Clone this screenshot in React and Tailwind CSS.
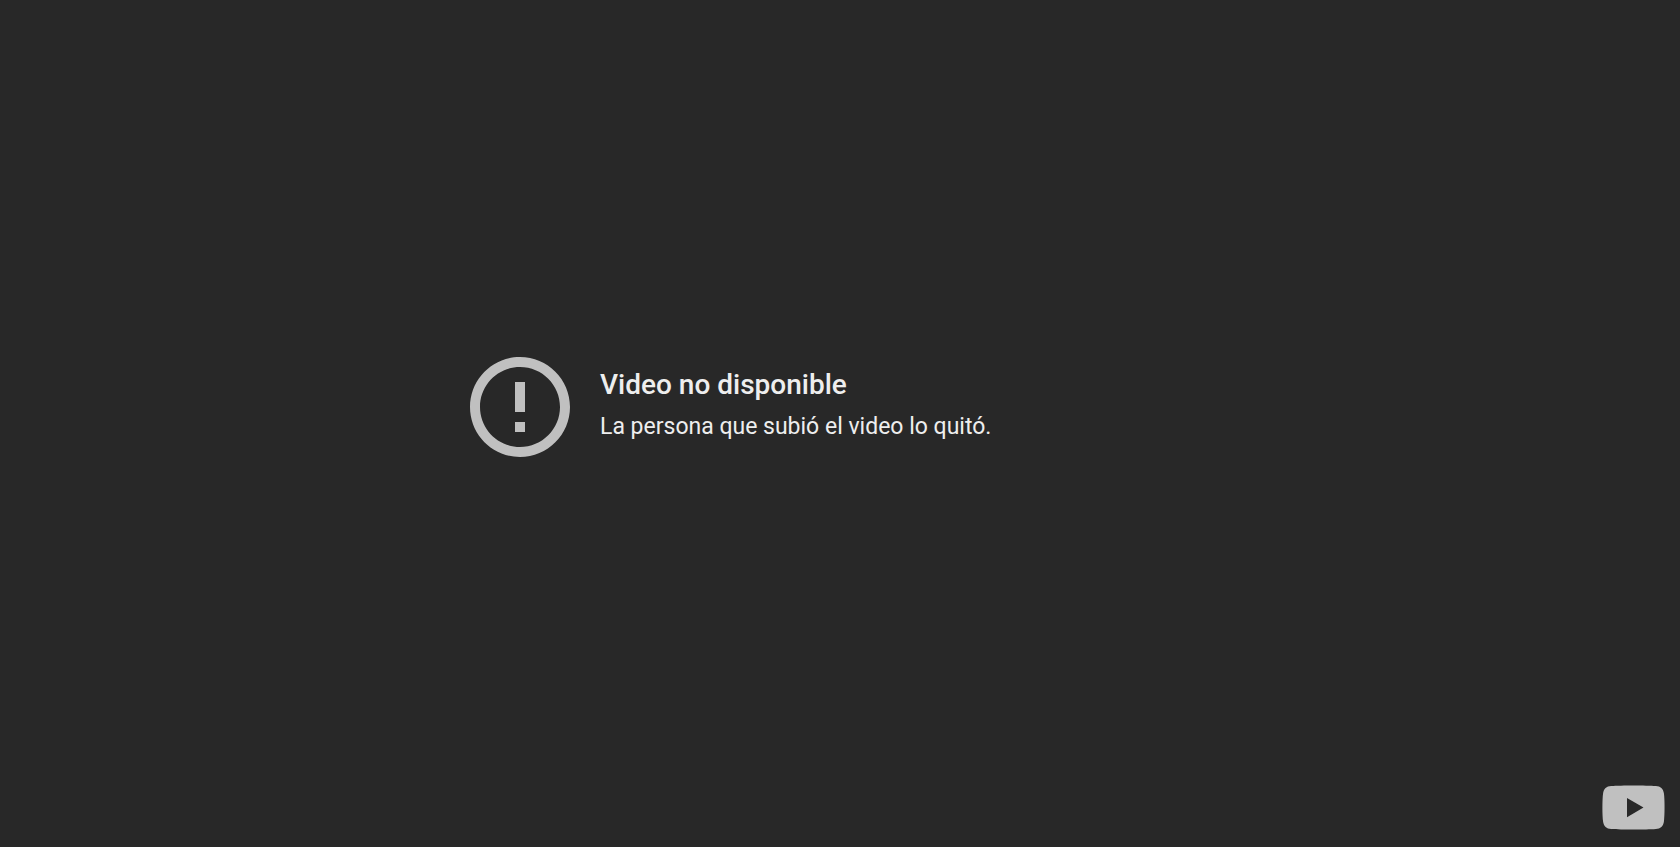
function ErrorIcon() {
  return (
    <svg className="size-[120px] shrink-0" viewBox="0 0 24 24" fill="#c0c0c0" aria-hidden="true">
      <path d="M11 15h2v2h-2zm0-8h2v6h-2zm.99-5C6.47 2 2 6.48 2 12s4.47 10 9.99 10C17.52 22 22 17.52 22 12S17.52 2 11.99 2zM12 20c-4.42 0-8-3.58-8-8s3.58-8 8-8 8 3.58 8 8-3.58 8-8 8z" />
    </svg>
  );
}

function PlayLogo() {
  return (
    <svg className="block h-[45px] w-[63px]" viewBox="0 0 63 45" fill="#c0c0c0" aria-hidden="true">
      <path
        fillRule="evenodd"
        d="M31.5.4C23 .4 14 .6 9.2 1 4.4 1.3 1.8 3.7 1.1 8.3.2 14 .2 31 1.1 36.7c.7 4.6 3.3 7 8.1 7.3 4.8.4 13.8.6 22.3.6s17.5-.2 22.3-.6c4.8-.3 7.4-2.7 8.1-7.3.9-5.7.9-22.7 0-28.4C61.2 3.7 58.6 1.3 53.8 1 49 .6 40 .4 31.5.4zM25 13v19.2l16.5-9.6z"
      />
    </svg>
  );
}

export default function App() {
  return (
    <div className="relative flex min-h-screen items-center justify-center bg-[#282828] px-6 pb-[34px] font-[Roboto,sans-serif] text-[#eeeeee]">
      <main className="flex w-full max-w-[760px] items-center gap-5">
        <ErrorIcon />
        <div className="pb-1">
          <h1 className="text-[28px] leading-9 font-medium">Video no disponible</h1>
          <p className="mt-2 text-[23px] leading-8">La persona que subió el video lo quitó.</p>
        </div>
      </main>
      <a href="#youtube" aria-label="YouTube" className="absolute right-[15px] bottom-[17px]">
        <PlayLogo />
      </a>
    </div>
  );
}
